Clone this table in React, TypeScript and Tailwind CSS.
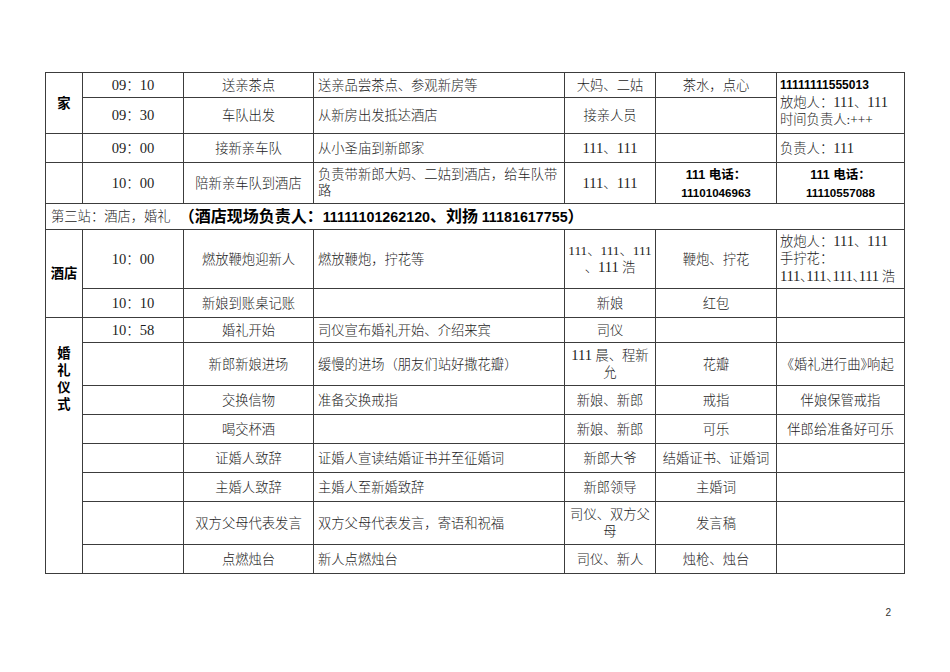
import React from 'react';

type Al = 'c' | 'l' | 'tl';

const base = "border-r border-b border-[#3c3c3c] flex overflow-hidden whitespace-nowrap";

function f(s: string): React.ReactNode {
  const parts = s.split(/(\d+)/);
  return parts.map((p, i) =>
    /^\d+$/.test(p) ? (
      <span key={i} className="text-[14.6px]">{p}</span>
    ) : (
      <React.Fragment key={i}>{p}</React.Fragment>
    )
  );
}

function C({ a = 'c', className = '', children }: { a?: Al; className?: string; children?: React.ReactNode }) {
  const al =
    a === 'c'
      ? 'items-center justify-center text-center'
      : a === 'l'
      ? 'items-center justify-start text-left pl-[4px]'
      : 'items-start justify-start text-left pl-[3px] pt-[3px]';
  return <div className={`${base} ${al} ${className}`}>{typeof children === 'string' ? f(children) : children}</div>;
}

function B({ children, className = '' }: { children?: React.ReactNode; className?: string }) {
  return <span className={`font-['Liberation_Sans','Noto_Sans_CJK_SC',sans-serif] font-bold text-black ${className}`}>{children}</span>;
}

export default function App() {
  return (
    <div className="w-[950px] h-[672px] bg-white pt-[72px] pl-[45px] text-[#1c1c1c] font-['Liberation_Serif','Noto_Sans_CJK_SC',serif] font-light text-[13.3px] leading-[17px]">
      <div className="grid w-[860px] grid-cols-[37px_101px_130px_251px_91px_121px_128px] grid-rows-[25px_36px_29px_41px_26px_59px_29px_25px_43px_29px_29px_29px_29px_43px_29px] border-t border-l border-[#3c3c3c]">
        {/* Row 1 */}
        <C className="row-span-2"><B>家</B></C>
        <C>09：10</C>
        <C>送亲茶点</C>
        <C a="l">送亲品尝茶点、参观新房等</C>
        <C>大妈、二姑</C>
        <C>茶水，点心</C>
        <C a="tl" className="row-span-2">
          <div>
            <div><B className="text-[12px]">11111111555013</B></div>
            <div>{f('放炮人：111、111')}</div>
            <div>时间负责人:+++</div>
          </div>
        </C>
        {/* Row 2 */}
        <C>09：30</C>
        <C>车队出发</C>
        <C a="l">从新房出发抵达酒店</C>
        <C>接亲人员</C>
        <C></C>
        {/* Row 3 */}
        <C></C>
        <C>09：00</C>
        <C>接新亲车队</C>
        <C a="l">从小圣庙到新郎家</C>
        <C>111、111</C>
        <C></C>
        <C a="l" className="!pl-[3px]">负责人：111</C>
        {/* Row 4 */}
        <C></C>
        <C>10：00</C>
        <C>陪新亲车队到酒店</C>
        <C a="l">
          <div className="leading-[16px]">
            <div>负责带新郎大妈、二姑到酒店，给车队带</div>
            <div>路</div>
          </div>
        </C>
        <C>111、111</C>
        <C>
          <div>
            <div><B className="text-[12.5px]">111 电话：</B></div>
            <div><B className="text-[11.6px]">11101046963</B></div>
          </div>
        </C>
        <C>
          <div>
            <div><B className="text-[12.5px]">111 电话：</B></div>
            <div><B className="text-[11.6px]">11110557088</B></div>
          </div>
        </C>
        {/* Row 5 */}
        <C a="l" className="col-span-7 !pl-[5px]">
          <span>第三站：酒店，婚礼</span>
          <span className="ml-[8px] font-['Noto_Sans_CJK_SC',sans-serif] font-bold text-black text-[16px]">
            （酒店现场负责人：<B className="text-[14.3px]">11111101262120</B>、刘扬 <B className="text-[14.3px]">11181617755</B>）
          </span>
        </C>
        {/* Row 6 */}
        <C className="row-span-2"><B>酒店</B></C>
        <C>10：00</C>
        <C>燃放鞭炮迎新人</C>
        <C a="l">燃放鞭炮，拧花等</C>
        <C>
          <div>
            <div>111、111、111</div>
            <div>{f('、111 浩')}</div>
          </div>
        </C>
        <C>鞭炮、拧花</C>
        <C a="l" className="!pl-[3px]">
          <div className="leading-[17.5px]">
            <div>{f('放炮人：111、111')}</div>
            <div>手拧花：</div>
            <div className="[font-feature-settings:'halt'] tracking-[-0.3px]">{f('111、111、111、111 浩')}</div>
          </div>
        </C>
        {/* Row 7 */}
        <C>10：10</C>
        <C>新娘到账桌记账</C>
        <C a="l"></C>
        <C>新娘</C>
        <C>红包</C>
        <C></C>
        {/* Row 8 */}
        <C a="tl" className="row-span-8 !justify-center !pl-0 !pt-[27px]">
          <div className="text-center">
            <div><B>婚</B></div>
            <div><B>礼</B></div>
            <div><B>仪</B></div>
            <div><B>式</B></div>
          </div>
        </C>
        <C>10：58</C>
        <C>婚礼开始</C>
        <C a="l">司仪宣布婚礼开始、介绍来宾</C>
        <C>司仪</C>
        <C></C>
        <C></C>
        {/* Row 9 */}
        <C></C>
        <C>新郎新娘进场</C>
        <C a="l">缓慢的进场（朋友们站好撒花瓣）</C>
        <C>
          <div>
            <div>{f('111 晨、程新')}</div>
            <div>允</div>
          </div>
        </C>
        <C>花瓣</C>
        <C><span className="[font-feature-settings:'halt']">《婚礼进行曲》响起</span></C>
        {/* Row 10 */}
        <C></C>
        <C>交换信物</C>
        <C a="l">准备交换戒指</C>
        <C>新娘、新郎</C>
        <C>戒指</C>
        <C>伴娘保管戒指</C>
        {/* Row 11 */}
        <C></C>
        <C>喝交杯酒</C>
        <C a="l"></C>
        <C>新娘、新郎</C>
        <C>可乐</C>
        <C>伴郎给准备好可乐</C>
        {/* Row 12 */}
        <C></C>
        <C>证婚人致辞</C>
        <C a="l">证婚人宣读结婚证书并至征婚词</C>
        <C>新郎大爷</C>
        <C>结婚证书、证婚词</C>
        <C></C>
        {/* Row 13 */}
        <C></C>
        <C>主婚人致辞</C>
        <C a="l">主婚人至新婚致辞</C>
        <C>新郎领导</C>
        <C>主婚词</C>
        <C></C>
        {/* Row 14 */}
        <C></C>
        <C>双方父母代表发言</C>
        <C a="l">双方父母代表发言，寄语和祝福</C>
        <C>
          <div>
            <div>司仪、双方父</div>
            <div>母</div>
          </div>
        </C>
        <C>发言稿</C>
        <C></C>
        {/* Row 15 */}
        <C></C>
        <C>点燃烛台</C>
        <C a="l">新人点燃烛台</C>
        <C>司仪、新人</C>
        <C>烛枪、烛台</C>
        <C></C>
      </div>
      <div className="mt-[30px] w-[846px] text-right text-[10px] text-[#333] font-normal font-['Liberation_Sans',sans-serif]">2</div>
    </div>
  );
}
